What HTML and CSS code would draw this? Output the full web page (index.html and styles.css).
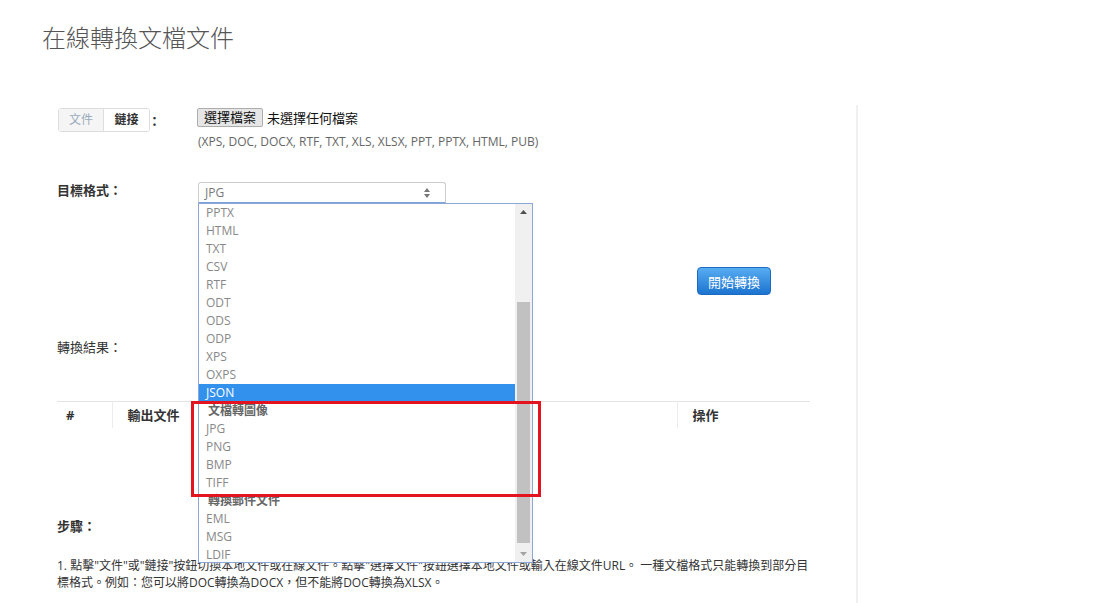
FILE: index.html
```html
<!DOCTYPE html>
<html lang="zh-TW">
<head>
  <meta charset="UTF-8" />
  <meta name="viewport" content="width=device-width, initial-scale=1.0" />
  <title>在線轉換文檔文件</title>
  <link rel="stylesheet" href="styles.css">
</head>
<body>
  <h1 class="page-title">在線轉換文檔文件</h1>

  <div class="main">
    <div class="form-row source-row">
      <div class="row-label">
        <div class="toggle">
          <span class="toggle-item active">文件</span>
          <span class="toggle-item">鏈接</span>
        </div>
        <span class="colon">：</span>
      </div>
      <div class="row-field">
        <div class="file-input">
          <span class="file-btn">選擇檔案</span>
          <span class="file-name">未選擇任何檔案</span>
        </div>
        <div class="hint">(XPS, DOC, DOCX, RTF, TXT, XLS, XLSX, PPT, PPTX, HTML, PUB)</div>
      </div>
    </div>

    <div class="form-row target-row">
      <div class="row-label label-bold">目標格式：</div>
      <div class="row-field">
        <div class="select-wrap">
          <div class="select">
            <span>JPG</span>
            <svg class="select-arrows" width="8" height="12" viewBox="0 0 8 12">
              <path d="M4 1 L7 5 L1 5 Z" fill="#777"/>
              <path d="M4 11 L7 7 L1 7 Z" fill="#777"/>
            </svg>
          </div>

          <!-- open option list -->
          <div class="dropdown">
            <ul class="options">
              <li>PPTX</li>
              <li>HTML</li>
              <li>TXT</li>
              <li>CSV</li>
              <li>RTF</li>
              <li>ODT</li>
              <li>ODS</li>
              <li>ODP</li>
              <li>XPS</li>
              <li>OXPS</li>
              <li class="selected">JSON</li>
              <li class="group">文檔轉圖像</li>
              <li>JPG</li>
              <li>PNG</li>
              <li>BMP</li>
              <li>TIFF</li>
              <li class="group">轉換郵件文件</li>
              <li>EML</li>
              <li>MSG</li>
              <li>LDIF</li>
            </ul>
            <div class="scrollbar">
              <svg class="scroll-arrow" width="17" height="17" viewBox="0 0 17 17">
                <path d="M8.5 6 L12 10 L5 10 Z" fill="#505050"/>
              </svg>
              <div class="scroll-track"><div class="scroll-thumb"></div></div>
              <svg class="scroll-arrow" width="17" height="17" viewBox="0 0 17 17">
                <path d="M8.5 11 L12 7 L5 7 Z" fill="#a3a3a3"/>
              </svg>
            </div>
          </div>
          <div class="mark-box"></div>
        </div>
      </div>
    </div>

    <div class="action-row">
      <button class="convert-btn">開始轉換</button>
    </div>

    <div class="result-label">轉換結果：</div>
    <table class="result-table">
      <thead>
        <tr>
          <th class="col-index">#</th>
          <th class="col-file">輸出文件</th>
          <th class="col-action">操作</th>
        </tr>
      </thead>
    </table>

    <div class="steps-title">步驟：</div>
    <p class="steps-text">1. 點擊"文件"或"鏈接"按鈕切換本地文件或在線文件。點擊"選擇文件"按鈕選擇本地文件或輸入在線文件URL。 一種文檔格式只能轉換到部分目標格式。例如：您可以將DOC轉換為DOCX，但不能將DOC轉換為XLSX。</p>
  </div>
</body>
</html>
```

FILE: styles.css
```css
* { box-sizing: border-box; }

body {
  margin: 0;
  background: #fff;
  color: #333;
  font-family: "Open Sans", "Noto Sans CJK TC", sans-serif;
  font-size: 12px;
}

.page-title {
  margin: 22px 0 0 42px;
  font-size: 24px;
  line-height: 32px;
  font-weight: 300;
  color: #555;
}

.main {
  margin: 51px 0 0 50px;
  width: 808px;
  min-height: 500px;
  padding: 3px 47px 0 7px;
  border-right: 2px solid #f0f0f0;
}

.form-row {
  display: flex;
  align-items: flex-start;
}

.row-label {
  width: 141px;
  flex-shrink: 0;
  display: flex;
  align-items: center;
}

.label-bold {
  font-weight: bold;
  font-size: 13px;
  line-height: 17px;
  color: #333;
}

.toggle {
  display: flex;
  margin-left: 1px;
  border: 1px solid #ddd;
  border-radius: 3px;
  overflow: hidden;
}

.toggle-item {
  width: 45px;
  height: 22px;
  line-height: 22px;
  text-align: center;
  font-size: 12px;
  color: #333;
  font-weight: bold;
  background: #fff;
}

.toggle-item.active {
  background: #f5f5f5;
  color: #9aabbd;
  font-weight: normal;
  border-right: 1px solid #ddd;
}

.colon {
  margin-left: -2px;
  font-weight: bold;
  font-size: 13px;
}

.file-input {
  display: flex;
  align-items: center;
  height: 19px;
  font-size: 13px;
  color: #111;
}

.file-btn {
  height: 19px;
  line-height: 17px;
  padding: 0 6px;
  margin-left: -1px;
  background: #e6e6e6;
  border: 1px solid #adadad;
  border-radius: 2px;
}

.file-name {
  margin-left: 4px;
}

.hint {
  margin-top: 6px;
  line-height: 18px;
  color: #666;
  font-size: 12px;
}

.target-row {
  margin-top: 31px;
}

.select-wrap {
  position: relative;
  width: 248px;
}

.select {
  display: flex;
  justify-content: space-between;
  align-items: center;
  height: 21px;
  padding: 0 14px 0 6px;
  border: 1px solid #ccc;
  border-bottom-color: #7aa3d8;
  border-radius: 3px 3px 0 0;
  color: #777;
  font-size: 12px;
}

.dropdown {
  position: absolute;
  top: 21px;
  left: 0;
  width: 335px;
  height: 360px;
  display: flex;
  background: #fff;
  border: 1px solid #8ea6d6;
  z-index: 5;
}

.options {
  flex: 1;
  margin: 0;
  padding: 0;
  list-style: none;
}

.options li {
  height: 18px;
  line-height: 18px;
  padding-left: 7px;
  color: #888;
  font-size: 12px;
}

.options li.selected {
  background: #3391ee;
  color: #fff;
}

.options li.group {
  padding-left: 9px;
  color: #666;
  font-weight: bold;
}

.scrollbar {
  width: 17px;
  display: flex;
  flex-direction: column;
  background: #f0f0f0;
}

.scroll-arrow {
  flex-shrink: 0;
}

.scroll-track {
  flex: 1;
  display: flex;
  flex-direction: column;
  justify-content: flex-end;
  padding: 0 2px 2px;
}

.scroll-thumb {
  height: 241px;
  background: #c1c1c1;
}

/* red frame around the image formats */
.mark-box {
  position: absolute;
  top: 219px;
  left: -7px;
  width: 350px;
  height: 96px;
  border: 3px solid #e3141f;
  z-index: 6;
}

.action-row {
  margin-top: 64px;
  padding-left: 640px;
}

.convert-btn {
  height: 28px;
  width: 74px;
  padding: 0;
  font-family: "Noto Sans CJK TC", sans-serif;
  font-size: 13px;
  color: #fff;
  background: linear-gradient(#58acf2, #1c74d0);
  border: 1px solid #1b6cc0;
  border-radius: 4px;
}

.result-label {
  margin-top: 43px;
  line-height: 18px;
  font-size: 13px;
}

.result-table {
  margin-top: 45px;
  width: 753px;
  border-collapse: collapse;
  border-top: 1px solid #e3e3e3;
}

.result-table th {
  height: 26px;
  padding: 0 15px;
  text-align: left;
  font-size: 13px;
  color: #333;
}

.result-table th + th {
  border-left: 1px solid #ececec;
}

.result-table .col-index {
  width: 55px;
  padding-left: 9px;
}

.result-table .col-action {
  width: 133px;
}

.steps-title {
  margin-top: 89px;
  line-height: 18px;
  font-size: 13px;
  font-weight: bold;
}

.steps-text {
  margin: 22px 0 0;
  width: 760px;
  line-height: 17px;
  font-size: 12px;
  color: #333;
}
```
